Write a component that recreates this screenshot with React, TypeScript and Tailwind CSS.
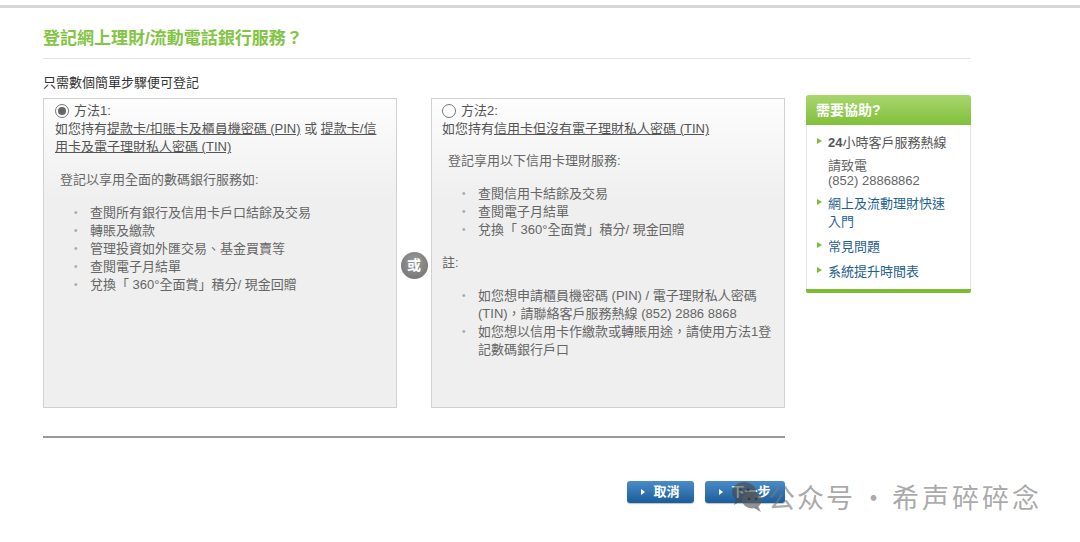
const font = { fontFamily: '"Liberation Sans", "Noto Sans CJK TC", sans-serif' };

function Radio({ checked }: { checked?: boolean }) {
  return (
    <span className="inline-flex h-[14px] w-[14px] items-center justify-center rounded-full border border-[#777] bg-white">
      {checked && <span className="h-[8px] w-[8px] rounded-full bg-[#666]" />}
    </span>
  );
}

function Bullets({ items }: { items: string[] }) {
  return (
    <ul className="flex flex-col">
      {items.map((t) => (
        <li key={t} className="flex leading-[18px]">
          <span className="w-[16px] shrink-0 text-[10px] text-[#aaa]">•</span>
          <span>{t}</span>
        </li>
      ))}
    </ul>
  );
}

function HelpItem({ children }: { children: React.ReactNode }) {
  return (
    <li className="flex">
      <span className="mt-[4px] mr-[6px] h-0 w-0 shrink-0 border-y-[3.5px] border-l-[5px] border-y-transparent border-l-[#7dbd32]" />
      <div className="w-[122px]">{children}</div>
    </li>
  );
}

function Button({ label, w }: { label: string; w: string }) {
  return (
    <button
      className={`flex h-[22px] ${w} items-center justify-center gap-[8px] rounded-[3px] bg-[linear-gradient(#4a8cc8,#1b5d98)] text-[13px] font-bold text-white shadow-[0_1px_1px_rgba(0,0,0,0.25)]`}
    >
      <span className="h-0 w-0 border-y-[3.5px] border-l-[4px] border-y-transparent border-l-white" />
      {label}
    </button>
  );
}

export default function App() {
  return (
    <div className="relative h-[542px] w-[1080px] overflow-hidden bg-white" style={font}>
      {/* top bar */}
      <div className="mt-[5px] h-[3px] w-full bg-[#d6d6d6]" />

      <div className="ml-[43px] w-[928px]">
        {/* TITLE */}
        <h1 className="mt-[19px] border-b border-[#e2e2e2] pb-[7px] text-[17px] leading-[24px] font-bold text-[#82c443]">
          登記網上理財/流動電話銀行服務？
        </h1>

        <p className="mt-[15px] text-[13px] leading-[18px] text-[#333]">只需數個簡單步驟便可登記</p>

        <div className="mt-[3px] flex gap-[21px]">
          {/* LEFT */}
          <div className="w-[742px]">
            <div className="mt-[3px] flex">
              {/* method 1 */}
              <div className="h-[310px] w-[354px] border border-[#d0d0d0] bg-[linear-gradient(#fdfdfd,#efefef_100px)] px-[11px] pt-[3px] text-[13px] text-[#666]">
                <div className="flex items-center gap-[5px] leading-[18px] text-[#555]">
                  <Radio checked />
                  方法1:
                </div>
                <p className="leading-[18px] text-[#555]">
                  如您持有<u>提款卡/扣賬卡及櫃員機密碼 (PIN)</u> 或 <u>提款卡/信用卡及電子理財私人密碼 (TIN)</u>
                </p>
                <p className="mt-[15px] ml-[5px] leading-[18px]">登記以享用全面的數碼銀行服務如:</p>
                <div className="mt-[15px] ml-[19px]">
                  <Bullets
                    items={[
                      "查閱所有銀行及信用卡戶口結餘及交易",
                      "轉賬及繳款",
                      "管理投資如外匯交易、基金買賣等",
                      "查閱電子月結單",
                      "兌換「 360°全面賞」積分/ 現金回贈",
                    ]}
                  />
                </div>
              </div>

              {/* OR */}
              <div className="flex w-[34px] justify-center">
                <div className="mt-[154px] flex h-[27px] w-[27px] items-center justify-center rounded-full bg-[radial-gradient(circle_at_50%_35%,#9a9a9a,#6e6e6e)] text-[14px] font-bold text-white">
                  或
                </div>
              </div>

              {/* method 2 */}
              <div className="h-[310px] w-[354px] border border-[#d0d0d0] bg-[linear-gradient(#fdfdfd,#efefef_100px)] px-[10px] pt-[3px] text-[13px] text-[#666]">
                <div className="flex items-center gap-[5px] leading-[18px] text-[#555]">
                  <Radio />
                  方法2:
                </div>
                <p className="leading-[18px] text-[#555]">
                  如您持有<u>信用卡但沒有電子理財私人密碼 (TIN)</u>
                </p>
                <p className="mt-[14px] ml-[6px] leading-[18px]">登記享用以下信用卡理財服務:</p>
                <div className="mt-[15px] ml-[20px]">
                  <Bullets items={["查閱信用卡結餘及交易", "查閱電子月結單", "兌換「 360°全面賞」積分/ 現金回贈"]} />
                </div>
                <p className="mt-[15px] leading-[18px]">註:</p>
                <div className="mt-[15px] ml-[20px]">
                  <Bullets
                    items={[
                      "如您想申請櫃員機密碼 (PIN) / 電子理財私人密碼 (TIN)，請聯絡客戶服務熱線 (852) 2886 8868",
                      "如您想以信用卡作繳款或轉賬用途，請使用方法1登記數碼銀行戶口",
                    ]}
                  />
                </div>
              </div>
            </div>

            <div className="mt-[28px] h-[2px] w-full bg-[#999]" />

            <div className="mt-[43px] flex justify-end gap-[11px]">
              <Button label="取消" w="w-[67px]" />
              <Button label="下一步" w="w-[80px]" />
            </div>
          </div>

          {/* HELP */}
          <aside className="w-[166px] self-start">
            <div className="flex h-[30px] items-center rounded-t-[3px] bg-[linear-gradient(#a9d66e,#80c03a)] px-[10px] text-[14px] font-bold text-white">
              需要協助?
            </div>
            <div className="border-x border-[#e4e4e4] bg-white px-[10px] pt-[9px] pb-[8px] text-[13px] leading-[18px]">
              <ul className="flex flex-col gap-[7px]">
                <HelpItem>
                  <p className="text-[#555]">
                    <b>24</b>小時客戶服務熱線
                  </p>
                  <p className="mt-[6px] leading-[15px] text-[#666]">
                    請致電
                    <br />
                    (852) 28868862
                  </p>
                </HelpItem>
                <HelpItem>
                  <p className="text-[#1f5f90]">網上及流動理財快速入門</p>
                </HelpItem>
                <HelpItem>
                  <p className="text-[#1f5f90]">常見問題</p>
                </HelpItem>
                <HelpItem>
                  <p className="text-[#1f5f90]">系統提升時間表</p>
                </HelpItem>
              </ul>
            </div>
            <div className="h-[4px] rounded-b-[2px] bg-[#7dbd32]" />
          </aside>
        </div>
      </div>

      {/* watermark overlay */}
      <div className="pointer-events-none absolute top-[480px] left-[731px] flex items-center">
        <svg width="34" height="34" viewBox="0 0 34 34" className="mr-[3px]">
          <ellipse cx="13" cy="12" rx="12" ry="10" fill="rgba(70,70,70,0.6)" />
          <path d="M5 19 L3 25 L10 21 Z" fill="rgba(70,70,70,0.6)" />
          <ellipse cx="21" cy="20" rx="10" ry="8.5" fill="rgba(90,90,90,0.65)" />
          <path d="M27 26 L30 32 L23 28 Z" fill="rgba(90,90,90,0.65)" />
          <circle cx="9" cy="10" r="1.5" fill="rgba(40,40,40,0.6)" />
          <circle cx="17" cy="10" r="1.5" fill="rgba(40,40,40,0.6)" />
          <circle cx="18" cy="19" r="1.3" fill="rgba(40,40,40,0.6)" />
          <circle cx="25" cy="19" r="1.3" fill="rgba(40,40,40,0.6)" />
        </svg>
        <span
          className="flex items-center text-[27px] leading-[30px] text-[rgba(120,120,120,0.65)]"
          style={{ fontFamily: '"Noto Sans CJK SC", sans-serif' }}
        >
          <span className="tracking-[2px]">公众号</span>
          <span className="mx-[5px]">·</span>
          <span className="tracking-[3px]">希声碎碎念</span>
        </span>
      </div>
    </div>
  );
}
